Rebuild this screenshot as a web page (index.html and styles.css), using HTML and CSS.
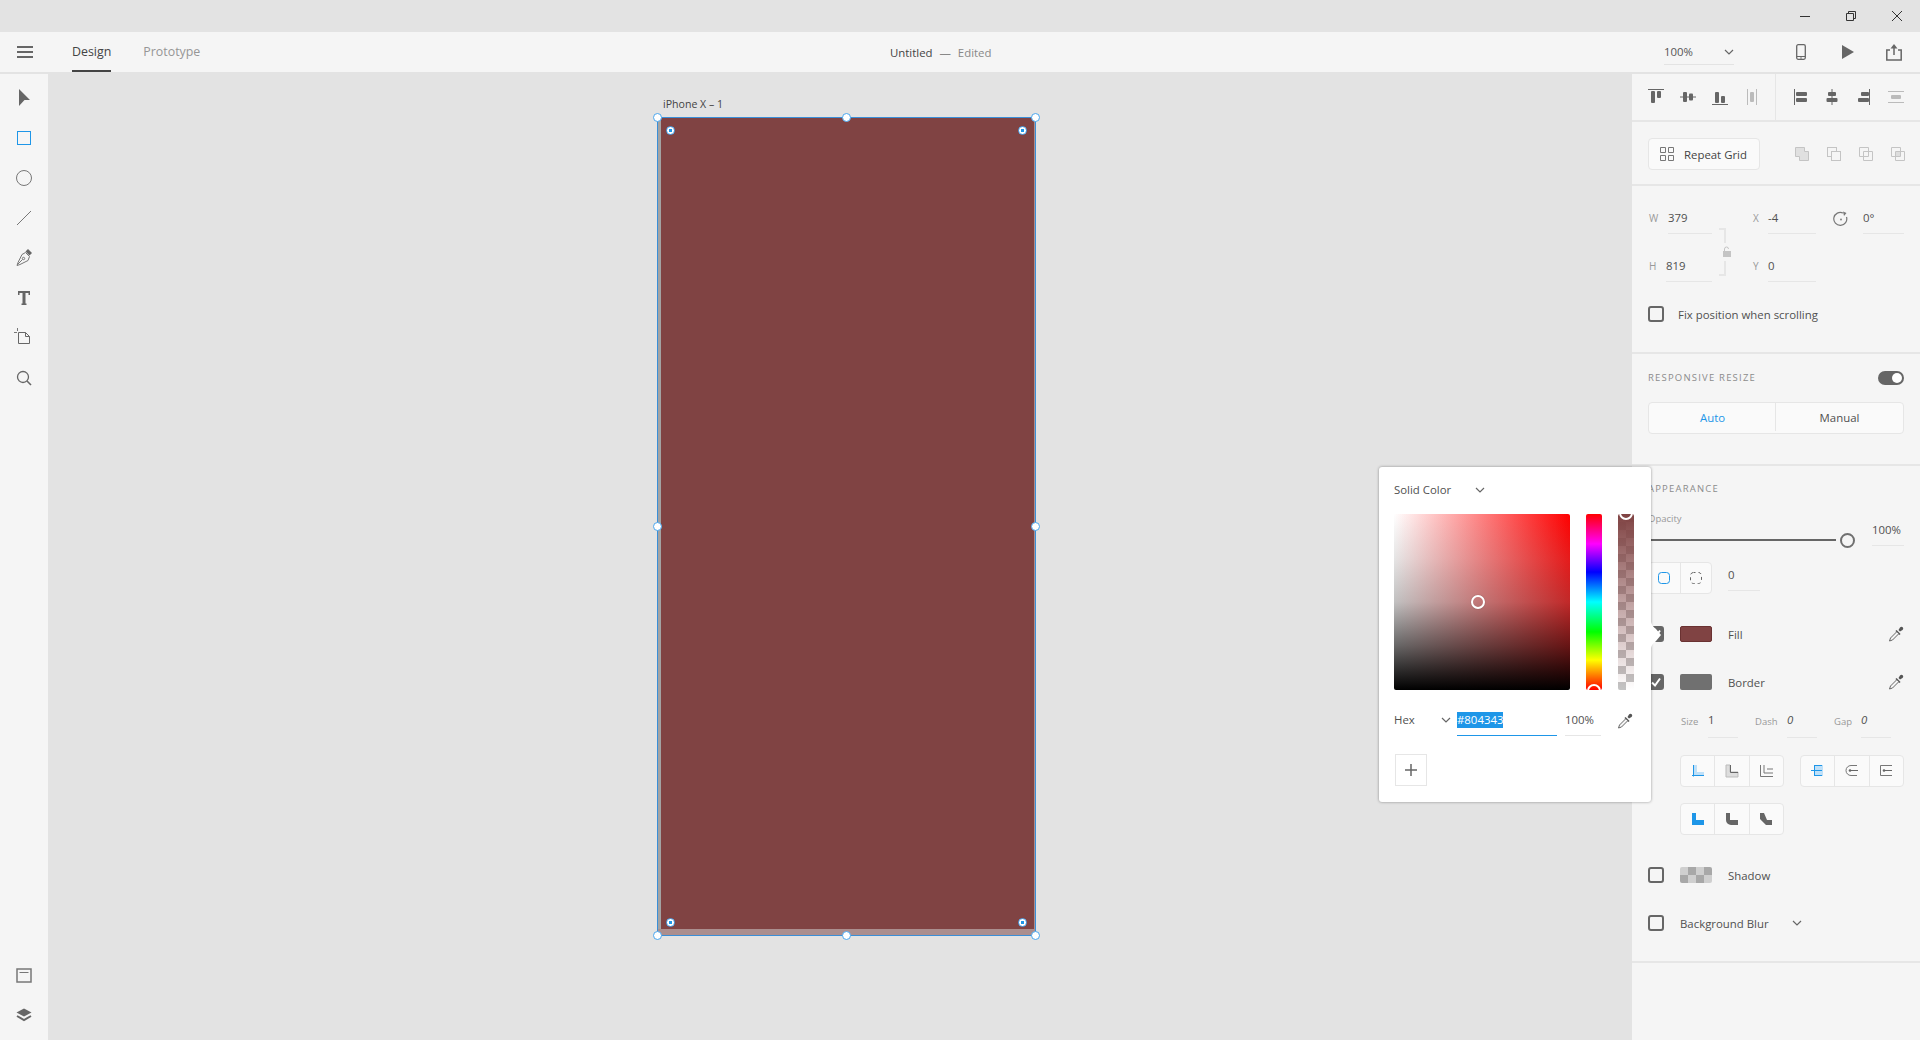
FILE: index.html
```html
<!DOCTYPE html>
<html lang="en">
<head>
    <meta charset="UTF-8" />
    <title>Untitled - Edited</title>
    <link rel="stylesheet" href="styles.css">
</head>
<body>
    <svg class="defs" width="0" height="0">
        <symbol id="chev" viewBox="0 0 10 6"><path d="M1 1l4 4 4-4" fill="none" stroke="#666" stroke-width="1.2"/></symbol>
        <symbol id="dropper" viewBox="0 0 16 16">
            <path d="M8 4.500l4 4" stroke="#555" stroke-width="1.600"/>
            <path d="M10.500 4L12 1.500c.8-1 2-1 2.700-.2s.8 1.900-.2 2.700L12 5.500z" fill="#555"/>
            <path d="M8.500 6L2.500 12 1.500 15 4.500 14l6-6" fill="#f5f5f5" stroke="#666"/>
        </symbol>
        <symbol id="tick" viewBox="0 0 12 12"><path d="M2 6.500l3 3 5-7" fill="none" stroke="#fff" stroke-width="2"/></symbol>
    </svg>

    <div class="app">
        <div class="titlebar">
            <button class="win-btn"><svg width="12" height="12"><path d="M1 6.500h10" stroke="#333"/></svg></button>
            <button class="win-btn"><svg width="12" height="12"><path d="M1.500 3.500h7v7h-7zM3.500 3.500v-2h7v7h-2" fill="none" stroke="#333"/></svg></button>
            <button class="win-btn"><svg width="12" height="12"><path d="M1 1l10 10M11 1L1 11" stroke="#333"/></svg></button>
        </div>

        <div class="topbar">
            <div class="topbar-left">
                <svg class="menu-icon" width="16" height="12"><path d="M0 1h16M0 6h16M0 11h16" stroke="#666" stroke-width="2"/></svg>
                <span class="tab tab-active">Design</span>
                <span class="tab">Prototype</span>
            </div>
            <div class="doc-title">Untitled <span class="doc-dash">—</span> <span class="doc-state">Edited</span></div>
            <div class="topbar-right">
                <div class="zoom-select">100%<svg width="10" height="6"><use href="#chev"/></svg></div>
                <svg class="top-icon device" width="10" height="16"><rect x=".7" y=".7" width="8.600" height="14.600" rx="1.500" fill="none" stroke="#666" stroke-width="1.300"/><path d="M1 12.500h8" stroke="#666"/><circle cx="5" cy="14" r=".8" fill="#666"/></svg>
                <svg class="top-icon play" width="12" height="14"><path d="M0 0l12 7-12 7z" fill="#666"/></svg>
                <svg class="top-icon share" width="16" height="17"><path d="M4 6H.8v10h14.400V6H12" fill="none" stroke="#666" stroke-width="1.500"/><path d="M8 11V2" stroke="#666" stroke-width="1.500"/><path d="M4.500 4.500L8 0l3.500 4.500z" fill="#666"/></svg>
            </div>
        </div>

        <div class="main">
            <div class="rail">
                <div class="rail-top">
                    <svg class="rail-icon" width="24" height="24"><path d="M7 3l11 11h-5.500L7 20z" fill="#666"/></svg>
                    <svg class="rail-icon" width="24" height="24"><rect x="5.500" y="5.500" width="13" height="13" fill="none" stroke="#1e96e8"/></svg>
                    <svg class="rail-icon" width="24" height="24"><circle cx="12" cy="12" r="7.500" fill="none" stroke="#777"/></svg>
                    <svg class="rail-icon" width="24" height="24"><path d="M5 19L19 5" stroke="#777"/></svg>
                    <svg class="rail-icon" width="24" height="24"><path d="M13.500 6.500l4 4-1.500 4-8 4-3 1 1-3 4-8z" fill="none" stroke="#777"/><path d="M13.500 5.500l2.500-2.500 4 4-2.500 2.500z" fill="#666"/><path d="M5.500 18.500l5-5" stroke="#777"/><circle cx="11.500" cy="12.500" r="1.200" fill="none" stroke="#777"/></svg>
                    <svg class="rail-icon" width="24" height="24"><rect x="6" y="5" width="12" height="2" fill="#666"/><rect x="6" y="5" width="1.500" height="4" fill="#666"/><rect x="16.500" y="5" width="1.500" height="4" fill="#666"/><rect x="10.500" y="5" width="3" height="13" fill="#666"/><rect x="9.500" y="17.500" width="5" height="1.500" fill="#666"/></svg>
                    <svg class="rail-icon" width="24" height="24"><path d="M6.500 6.500h7l4 4v7h-11zM13.500 6.500v4h4" fill="none" stroke="#666"/><path d="M2 6.500h3M5.500 2v3" stroke="#777"/></svg>
                    <svg class="rail-icon" width="24" height="24"><circle cx="11" cy="11" r="5.500" fill="none" stroke="#666" stroke-width="1.300"/><path d="M15 15l4 4" stroke="#666" stroke-width="1.600"/></svg>
                </div>
                <div class="rail-bottom">
                    <svg class="rail-icon" width="24" height="24"><rect x="5" y="5" width="14" height="13" fill="none" stroke="#777" stroke-width="1.500"/><path d="M7.500 8.500h9" stroke="#777"/></svg>
                    <svg class="rail-icon" width="24" height="24"><path d="M12 4.500l7.500 4-7.500 4-7.500-4z" fill="#666"/><path d="M5 12l7 4 7-4" fill="none" stroke="#666" stroke-width="2"/></svg>
                </div>
            </div>

            <div class="canvas">
                <div class="artboard-name">iPhone X – 1</div>
                <div class="artboard">
                    <div class="artboard-fill"></div>
                    <i class="handle h-tl"></i><i class="handle h-tc"></i><i class="handle h-tr"></i>
                    <i class="handle h-ml"></i><i class="handle h-mr"></i>
                    <i class="handle h-bl"></i><i class="handle h-bc"></i><i class="handle h-br"></i>
                    <i class="radius r-tl"></i><i class="radius r-tr"></i>
                    <i class="radius r-bl"></i><i class="radius r-br"></i>
                </div>
            </div>

            <div class="panel">
                <div class="section align-row">
                    <div class="align-group">
                        <svg width="20" height="20"><path d="M2 2.500h16" stroke="#666"/><rect x="5" y="4" width="4" height="12" rx="1" fill="#666"/><rect x="11" y="4" width="4" height="7" rx="1" fill="#666"/></svg>
                        <svg width="20" height="20"><path d="M2 10h16" stroke="#666"/><rect x="5" y="5" width="4" height="10" rx="1" fill="#666"/><rect x="11" y="6.500" width="4" height="7" rx="1" fill="#666"/></svg>
                        <svg width="20" height="20"><path d="M2 17.500h16" stroke="#666"/><rect x="5" y="5" width="4" height="11" rx="1" fill="#666"/><rect x="11" y="9" width="4" height="7" rx="1" fill="#666"/></svg>
                        <svg width="20" height="20"><path d="M5.500 2v16M14.500 2v16" stroke="#bbb"/><rect x="8" y="5" width="4" height="10" rx="1" fill="#bbb"/></svg>
                    </div>
                    <div class="align-group align-group-h">
                        <svg width="20" height="20"><path d="M3.500 2v16" stroke="#666"/><rect x="5" y="5" width="11" height="4" rx="1" fill="#666"/><rect x="5" y="11" width="11" height="4" rx="1" fill="#666"/></svg>
                        <svg width="20" height="20"><path d="M9 2v16" stroke="#666"/><rect x="5" y="5" width="8" height="4" rx="1" fill="#666"/><rect x="3.500" y="11" width="11" height="4" rx="1" fill="#666"/></svg>
                        <svg width="20" height="20"><path d="M14.500 2v16" stroke="#666"/><rect x="6" y="5" width="8" height="4" rx="1" fill="#666"/><rect x="3" y="11" width="11" height="4" rx="1" fill="#666"/></svg>
                        <svg width="20" height="20"><path d="M1 4.500h16M1 15.500h16" stroke="#bbb"/><rect x="4" y="8" width="10" height="4" rx="1" fill="#bbb"/></svg>
                    </div>
                </div>

                <div class="section repeat-row">
                    <button class="repeat-btn">
                        <svg width="14" height="14"><path d="M.5.500h5v5h-5zM8.500.500h5v5h-5zM.5 8.500h5v5h-5zM8.500 8.500h5v5h-5z" fill="none" stroke="#777"/></svg>
                        Repeat Grid
                    </button>
                    <div class="bool-icons">
                        <svg width="16" height="16"><path d="M1.500 1.500h9v4h4v9h-9v-4h-4z" fill="#e0e0e0" stroke="#c4c4c4"/></svg>
                        <svg width="16" height="16"><rect x="1.500" y="1.500" width="9" height="9" fill="none" stroke="#c4c4c4"/><rect x="5.500" y="5.500" width="9" height="9" fill="#f5f5f5" stroke="#c4c4c4"/></svg>
                        <svg width="16" height="16"><path d="M1.500 1.500h9v9h-9zM5.500 5.500h9v9h-9z" fill="none" stroke="#c4c4c4"/></svg>
                        <svg width="16" height="16"><path d="M1.500 1.500h9v9h-9zM5.500 5.500h9v9h-9z" fill="none" stroke="#c4c4c4"/><rect x="6" y="6" width="4" height="4" fill="#ddd"/></svg>
                    </div>
                </div>

                <div class="section transform">
                    <div class="dim-row">
                        <span class="dim-label">W</span><span class="value w-val">379</span>
                        <span class="dim-label dim-second">X</span><span class="value xy-val">-4</span>
                        <svg class="rotate-icon" width="16" height="16"><path d="M13.500 6A6.500 6.500 0 1 1 10 2" fill="none" stroke="#777" stroke-width="1.200"/><path d="M10 .5l3.500 1.500-2.500 3z" fill="#777"/><circle cx="8" cy="8.500" r=".9" fill="#777"/></svg>
                        <span class="value rot-val">0°</span>
                    </div>
                    <div class="dim-row">
                        <span class="dim-label h-label">H</span><span class="value h-val">819</span>
                        <span class="dim-label dim-second">Y</span><span class="value xy-val">0</span>
                    </div>
                    <div class="lock-bracket"></div>
                    <svg class="lock-icon" width="8" height="18"><path d="M1.500 8V6a2 2 0 0 1 4 0" fill="none" stroke="#c4c4c4"/><rect y="8" width="8" height="6" fill="#c4c4c4"/></svg>
                    <label class="check-row">
                        <span class="checkbox"></span>
                        <span>Fix position when scrolling</span>
                    </label>
                </div>

                <div class="section responsive">
                    <div class="section-head">
                        <span class="section-title">RESPONSIVE RESIZE</span>
                        <span class="toggle"></span>
                    </div>
                    <div class="segmented">
                        <span class="seg-item seg-active">Auto</span>
                        <span class="seg-item">Manual</span>
                    </div>
                </div>

                <div class="section appearance">
                    <div class="section-title">APPEARANCE</div>
                    <div class="opacity-grid">
                        <div>
                            <div class="small-label">Opacity</div>
                            <div class="slider"><span class="slider-track"></span><span class="slider-knob"></span></div>
                        </div>
                        <span class="value opacity-val">100%</span>
                    </div>

                    <div class="corner-row">
                        <div class="btn-group btn-group-2">
                            <span class="group-btn"><svg width="14" height="14"><rect x="1.500" y="1.500" width="11" height="11" rx="3" fill="none" stroke="#1e96e8"/></svg></span>
                            <span class="group-btn"><svg width="14" height="14"><rect x="1.500" y="1.500" width="11" height="11" rx="3" fill="none" stroke="#666" stroke-dasharray="3 3" stroke-dashoffset="1"/></svg></span>
                        </div>
                        <span class="value corner-val">0</span>
                    </div>

                    <div class="style-row fill-row">
                        <span class="checkbox checkbox-on"><svg width="12" height="12"><use href="#tick"/></svg></span>
                        <span class="swatch swatch-fill"></span>
                        <span>Fill</span>
                        <svg class="dropper" width="16" height="16"><use href="#dropper"/></svg>
                    </div>
                    <div class="style-row border-row">
                        <span class="checkbox checkbox-on"><svg width="12" height="12"><use href="#tick"/></svg></span>
                        <span class="swatch swatch-border"></span>
                        <span>Border</span>
                        <svg class="dropper" width="16" height="16"><use href="#dropper"/></svg>
                    </div>

                    <div class="stroke-row">
                        <span class="small-label size-label">Size</span><span class="value stroke-val">1</span>
                        <span class="small-label dash-label">Dash</span><span class="value stroke-val stroke-em">0</span>
                        <span class="small-label gap-label">Gap</span><span class="value stroke-val stroke-em">0</span>
                    </div>

                    <div class="groups-row">
                        <div class="btn-group btn-group-3">
                            <span class="group-btn"><svg width="14" height="14"><path d="M3 1h3v7h7v3H3z" fill="#bfe0f8"/><path d="M2.500 1v11.500M1 11.500h12" stroke="#1e96e8" fill="none"/></svg></span>
                            <span class="group-btn"><svg width="14" height="14"><path d="M1 1h4v7h8v5H1z" fill="#ddd" stroke="#bbb"/><path d="M5.500 1v7.500H13" stroke="#666" fill="none"/></svg></span>
                            <span class="group-btn"><svg width="14" height="14"><path d="M1.500 1v11.500H14M5 1v8h9M8 5h6" stroke="#777" fill="none"/></svg></span>
                        </div>
                        <div class="btn-group btn-group-3">
                            <span class="group-btn"><svg width="14" height="14"><rect x="3" y="1" width="9" height="11" fill="#bfe0f8"/><path d="M3 1.500h8M0 6.500h11M3 11.500h8M3.500 1v11" stroke="#1e96e8" fill="none"/></svg></span>
                            <span class="group-btn"><svg width="14" height="14"><path d="M12 1.500H6a5 5 0 0 0 0 10h6" fill="none" stroke="#777"/><path d="M5 6.500h8" stroke="#666"/><circle cx="5" cy="6.500" r="1.300" fill="#666"/></svg></span>
                            <span class="group-btn"><svg width="14" height="14"><path d="M13 1.500H1.500v10H13" fill="none" stroke="#777"/><path d="M5 6.500h8" stroke="#666"/><circle cx="5" cy="6.500" r="1.300" fill="#666"/></svg></span>
                        </div>
                    </div>

                    <div class="btn-group btn-group-3 joins-row">
                        <span class="group-btn"><svg width="14" height="14"><path d="M1 1h4v7h8v5H1z" fill="#1e96e8"/></svg></span>
                        <span class="group-btn"><svg width="14" height="14"><path d="M1 1h4v7h8v5H6a5 5 0 0 1-5-5z" fill="#666"/></svg></span>
                        <span class="group-btn"><svg width="14" height="14"><path d="M1 1h4l3 7h5v5H7L1 7z" fill="#666"/></svg></span>
                    </div>

                    <div class="style-row shadow-row">
                        <span class="checkbox"></span>
                        <span class="swatch swatch-shadow"></span>
                        <span>Shadow</span>
                    </div>
                    <div class="style-row blur-row">
                        <span class="checkbox"></span>
                        <span>Background Blur</span>
                        <svg class="blur-chev" width="10" height="6"><use href="#chev"/></svg>
                    </div>
                </div>
            </div>
        </div>

        <!-- color picker floats over the panel -->
        <div class="picker">
            <svg class="picker-tail" width="12" height="26"><path d="M0 0c1 4 3 5 5 7l5 6-5 6c-2 2-4 3-5 7z" fill="#fff"/></svg>
            <div class="picker-head">Solid Color<svg width="10" height="6"><use href="#chev"/></svg></div>
            <div class="picker-colors">
                <div class="sat-field"><i class="sat-handle"></i></div>
                <div class="hue-bar"><i class="bar-handle bar-handle-bottom"></i></div>
                <div class="alpha-bar"><i class="bar-handle bar-handle-top"></i></div>
            </div>
            <div class="picker-inputs">
                <span class="hex-label">Hex</span>
                <svg class="hex-chev" width="10" height="6"><use href="#chev"/></svg>
                <span class="hex-input"><span class="hex-selected">#804343</span></span>
                <span class="value alpha-val">100%</span>
                <svg class="dropper picker-dropper" width="16" height="16"><use href="#dropper"/></svg>
            </div>
            <button class="add-swatch"><svg width="12" height="12"><path d="M6 0v12M0 6h12" stroke="#666" stroke-width="1.500"/></svg></button>
        </div>
    </div>
</body>
</html>
```

FILE: styles.css
```css
* {
    box-sizing: border-box;
}

html, body {
    margin: 0;
    padding: 0;
}

body {
    font-family: "Open Sans", "Noto Sans", sans-serif;
    font-size: 11.4px;
    color: #505050;
    background: #e3e3e3;
    overflow: hidden;
}

.defs {
    position: absolute;
}

svg {
    display: block;
    flex: none;
}

.app {
    position: relative;
    width: 1920px;
    height: 1040px;
    display: flex;
    flex-direction: column;
    overflow: hidden;
}

/* title bar */
.titlebar {
    height: 32px;
    display: flex;
    justify-content: flex-end;
    background: #e3e3e3;
}

.win-btn {
    width: 46px;
    height: 32px;
    border: none;
    background: none;
    padding: 0;
    display: flex;
    align-items: center;
    justify-content: center;
}

/* top bar */
.topbar {
    position: relative;
    height: 40px;
    display: flex;
    align-items: center;
    justify-content: space-between;
    background: #f5f5f5;
}

.topbar-left {
    height: 100%;
    display: flex;
    align-items: center;
    padding-left: 17px;
}

.menu-icon {
    margin-right: 39px;
}

.tab {
    height: 100%;
    display: flex;
    align-items: center;
    margin-right: 32px;
    font-size: 12.4px;
    color: #969696;
    border-bottom: 2px solid transparent;
}

.tab-active {
    color: #444;
    border-bottom-color: #444;
}

.doc-title {
    position: absolute;
    left: 890px;
    top: 13px;
    line-height: 16px;
    color: #444;
}

.doc-dash {
    margin: 0 4px;
}

.doc-dash, .doc-state {
    color: #888;
}

.topbar-right {
    display: flex;
    align-items: center;
}

.zoom-select {
    width: 70px;
    height: 24px;
    display: flex;
    align-items: center;
    justify-content: space-between;
    padding-bottom: 2px;
    border-bottom: 1px solid #e3e3e3;
    margin-top: 2px;
    color: #555;
}

.device {
    margin-left: 62px;
}

.play {
    margin-left: 36px;
}

.share {
    margin-left: 32px;
    margin-right: 18px;
}

/* main area */
.main {
    flex: 1;
    display: flex;
    min-height: 0;
    margin-top: 2px;
}

.rail {
    width: 48px;
    background: #f5f5f5;
    display: flex;
    flex-direction: column;
    justify-content: space-between;
    align-items: center;
    padding: 12px 0;
}

.rail-top, .rail-bottom {
    display: flex;
    flex-direction: column;
    gap: 16px;
}

.canvas {
    position: relative;
    flex: 1;
    background: #e3e3e3;
}

.artboard-name {
    position: absolute;
    left: 615px;
    top: 22px;
    font-size: 10.6px;
    line-height: 16px;
    color: #444;
}

.artboard {
    position: absolute;
    left: 609px;
    top: 43px;
    width: 379px;
    height: 819px;
    border: 1px solid #3a8fd8;
    background: #ab8e8e;
}

.artboard-fill {
    height: 811px;
    margin-right: 1px;
    background: #804343;
    border-left: 3px solid #a3a3a3;
}

.handle {
    position: absolute;
    width: 9px;
    height: 9px;
    border-radius: 50%;
    background: #fff;
    border: 1px solid #4aa6ee;
}

.h-tl { left: -5px; top: -5px; }
.h-tc { left: 184px; top: -5px; }
.h-tr { right: -5px; top: -5px; }
.h-ml { left: -5px; top: 404px; }
.h-mr { right: -5px; top: 404px; }
.h-bl { left: -5px; bottom: -5px; }
.h-bc { left: 184px; bottom: -5px; }
.h-br { right: -5px; bottom: -5px; }

.radius {
    position: absolute;
    width: 9px;
    height: 9px;
    border-radius: 50%;
    background: radial-gradient(circle, #1e96e8 0 1.5px, #fff 2px);
    border: 1px solid #4aa6ee;
}

.r-tl { left: 8px; top: 8px; }
.r-tr { right: 8px; top: 8px; }
.r-bl { left: 8px; bottom: 8px; }
.r-br { right: 8px; bottom: 8px; }

/* right panel */
.panel {
    width: 288px;
    background: #f5f5f5;
}

.section {
    border-bottom: 2px solid #e6e6e6;
}

.align-row {
    height: 48px;
    display: flex;
}

.align-group {
    width: 143px;
    display: flex;
    align-items: center;
    gap: 12px;
    padding-left: 14px;
}

.align-group-h {
    width: 145px;
    border-left: 1px solid #e6e6e6;
    padding-left: 15px;
}

.repeat-row {
    height: 64px;
    padding: 16px 16px 0;
    display: flex;
    justify-content: space-between;
}

.repeat-btn {
    width: 112px;
    height: 32px;
    display: flex;
    align-items: center;
    gap: 10px;
    padding: 0 0 0 11px;
    font-family: inherit;
    font-size: 11.4px;
    color: #444;
    background: #fafafa;
    border: 1px solid #e6e6e6;
    border-radius: 4px;
}

.bool-icons {
    height: 32px;
    display: flex;
    align-items: center;
    gap: 16px;
    margin-right: -2px;
}

.transform {
    position: relative;
    height: 168px;
    padding-top: 18px;
}

.dim-row {
    height: 30px;
    display: flex;
    align-items: flex-start;
    padding-left: 17px;
    margin-bottom: 18px;
}

.dim-label {
    width: 19px;
    line-height: 29px;
    font-size: 10px;
    color: #999;
}

.h-label {
    width: 17px;
}

.dim-second {
    width: 15px;
    margin-left: 41px;
}

.value {
    display: block;
    height: 30px;
    line-height: 27px;
    color: #505050;
    border-bottom: 1px solid #e6e6e6;
}

.w-val {
    width: 44px;
}

.h-val {
    width: 46px;
}

.xy-val {
    width: 48px;
}

.rotate-icon {
    margin: 7px 14px 0 17px;
}

.rot-val {
    width: 41px;
}

.lock-bracket {
    position: absolute;
    left: 87px;
    top: 42px;
    width: 7px;
    height: 48px;
    border: 2px solid #e6e6e6;
    border-left: none;
}

.lock-icon {
    position: absolute;
    left: 91px;
    top: 57px;
    background: #f5f5f5;
}

.check-row {
    display: flex;
    align-items: center;
    gap: 14px;
    height: 16px;
    margin: 24px 0 0 16px;
}

.checkbox {
    width: 16px;
    height: 16px;
    flex: none;
    border: 2px solid #666;
    border-radius: 3px;
}

.checkbox-on {
    background: #666;
}

.responsive {
    height: 112px;
    padding: 16px 16px 0;
}

.section-head {
    height: 16px;
    display: flex;
    align-items: center;
    justify-content: space-between;
}

.section-title {
    font-size: 9.5px;
    line-height: 14px;
    letter-spacing: 1.2px;
    color: #8c8c8c;
}

.toggle {
    position: relative;
    width: 26px;
    height: 14px;
    border-radius: 7px;
    background: #666;
}

.toggle::after {
    content: "";
    position: absolute;
    right: 2px;
    top: 2px;
    width: 10px;
    height: 10px;
    border-radius: 50%;
    background: #fff;
}

.segmented {
    margin-top: 16px;
    height: 32px;
    display: flex;
    padding-bottom: 2px;
    background: #fafafa;
    border: 1px solid #e6e6e6;
    border-radius: 4px;
}

.seg-item {
    flex: 1;
    display: flex;
    align-items: center;
    justify-content: center;
    color: #505050;
}

.seg-item + .seg-item {
    box-shadow: -1px 0 0 #e6e6e6;
}

.seg-active {
    color: #1e96e8;
}

.appearance {
    height: 497px;
    padding: 16px 16px 0;
}

.opacity-grid {
    display: grid;
    grid-template-columns: 207px 32px;
    column-gap: 17px;
    margin-top: 16px;
}

.small-label {
    font-size: 9.5px;
    line-height: 14px;
    color: #999;
}

.slider {
    height: 28px;
    display: flex;
    align-items: center;
}

.slider-track {
    flex: 1;
    height: 2px;
    background: #666;
    margin-right: 4px;
}

.slider-knob {
    width: 15px;
    height: 15px;
    border-radius: 50%;
    border: 2px solid #707070;
}

.opacity-val {
    margin-top: 4px;
}

.corner-row {
    display: flex;
    margin-top: 8px;
}

.btn-group {
    height: 32px;
    display: flex;
    background: #fafafa;
    border: 1px solid #e6e6e6;
    border-radius: 4px;
}

.group-btn {
    flex: 1;
    display: flex;
    align-items: center;
    justify-content: center;
}

.group-btn + .group-btn {
    border-left: 1px solid #e6e6e6;
}

.btn-group-2 {
    width: 64px;
}

.btn-group-3 {
    width: 104px;
}

.corner-val {
    width: 32px;
    height: 29px;
    margin-left: 16px;
    line-height: 25px;
}

.style-row {
    height: 32px;
    display: flex;
    align-items: center;
    gap: 16px;
}

.fill-row {
    margin-top: 24px;
}

.border-row {
    margin-top: 16px;
}

.swatch {
    width: 32px;
    height: 16px;
    border-radius: 2px;
}

.swatch-fill {
    background: #804343;
    border: 1px solid #6a3232;
}

.swatch-border {
    background: #707070;
}

.swatch-shadow {
    background: repeating-conic-gradient(#a8a8a8 0 25%, #cfcfcf 0 50%) 0 0 / 16px 16px;
}

.dropper {
    margin-left: auto;
}

.stroke-row {
    height: 32px;
    display: flex;
    align-items: flex-start;
    margin: 8px 0 0 33px;
}

.stroke-row .small-label {
    line-height: 32px;
}

.stroke-val {
    width: 30px;
    height: 32px;
    line-height: 28px;
}

.stroke-em {
    font-style: italic;
}

.size-label {
    width: 27px;
}

.dash-label {
    width: 32px;
    margin-left: 17px;
}

.gap-label {
    width: 27px;
    margin-left: 17px;
}

.groups-row {
    display: flex;
    gap: 16px;
    margin: 17px 0 0 32px;
}

.joins-row {
    margin: 16px 0 0 32px;
}

.shadow-row {
    margin-top: 24px;
}

.blur-row {
    margin-top: 16px;
}

.blur-chev {
    margin-left: 7px;
}

/* color picker */
.picker {
    position: absolute;
    left: 1379px;
    top: 467px;
    width: 272px;
    height: 335px;
    padding: 0 15px;
    background: #fff;
    border-radius: 3px;
    box-shadow: 0 0 3px rgba(0, 0, 0, 0.4);
}

.picker-tail {
    position: absolute;
    left: 272px;
    top: 155px;
}

.picker-head {
    height: 47px;
    display: flex;
    align-items: center;
    padding-bottom: 2px;
}

.picker-head svg {
    margin-left: 24px;
}

.picker-colors {
    display: flex;
    gap: 16px;
    height: 176px;
}

/* the reference's field is lighter than a plain black overlay, so grey stops */
.sat-field {
    position: relative;
    width: 176px;
    border-radius: 2px;
    background:
        linear-gradient(to bottom, rgba(150, 150, 150, 0), rgba(130, 130, 130, 0.2) 25%, rgba(100, 100, 100, 0.4) 50%, rgba(30, 30, 30, 0.68) 75%, rgba(8, 8, 8, 0.87) 90%, #000),
        linear-gradient(to right, #fff, #f00);
}

.sat-handle {
    position: absolute;
    left: 77px;
    top: 81px;
    width: 14px;
    height: 14px;
    border-radius: 50%;
    border: 2px solid #fff;
    box-shadow: 0 0 1px rgba(0, 0, 0, 0.5);
}

.hue-bar, .alpha-bar {
    position: relative;
    width: 16px;
    overflow: hidden;
    border-radius: 2px;
}

.hue-bar {
    background: linear-gradient(to bottom, #f00, #f0f 17%, #00f 33%, #0ff 50%, #0f0 67%, #ff0 83%, #f00);
}

.alpha-bar {
    background: linear-gradient(to bottom, #804343, rgba(128, 67, 67, 0)), repeating-conic-gradient(#c4c4c4 0 25%, #fff 0 50%) 0 0 / 16px 16px;
}

.bar-handle {
    position: absolute;
    left: 1px;
    width: 14px;
    height: 14px;
    border-radius: 50%;
    border: 2px solid #fff;
}

.bar-handle-bottom {
    bottom: -8px;
}

.bar-handle-top {
    top: -8px;
}

.picker-inputs {
    height: 30px;
    margin-top: 16px;
    display: flex;
    align-items: flex-start;
}

.hex-label {
    width: 47px;
    line-height: 28px;
}

.hex-chev {
    margin-top: 11px;
}

.hex-input {
    width: 100px;
    height: 30px;
    margin-left: 6px;
    border-bottom: 1px solid #1e96e8;
    line-height: 28px;
}

.hex-selected {
    display: inline-block;
    line-height: 16px;
    background: #1e96e8;
    color: #fff;
}

.alpha-val {
    width: 36px;
    margin-left: 8px;
}

.picker-dropper {
    margin: 7px 2px 0 16px;
}

.add-swatch {
    width: 32px;
    height: 32px;
    margin: 18px 0 0 1px;
    padding: 0;
    display: flex;
    align-items: center;
    justify-content: center;
    background: #fff;
    border: 1px solid #e6e6e6;
}
```
